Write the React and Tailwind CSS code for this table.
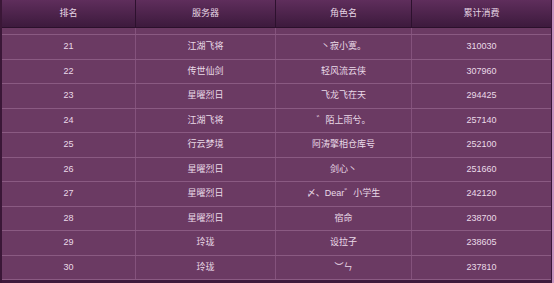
import React from 'react';

const rows = [
  ['21', '江湖飞将', '丶寂小寞。', '310030'],
  ['22', '传世仙剑', '轻风流云侠', '307960'],
  ['23', '星曜烈日', '飞龙飞在天', '294425'],
  ['24', '江湖飞将', '゛陌上雨兮。', '257140'],
  ['25', '行云梦境', '阿涛擎相仓库号', '252100'],
  ['26', '星曜烈日', '剑心丶', '251660'],
  ['27', '星曜烈日', '〆、Dear゛小学生', '242120'],
  ['28', '星曜烈日', '宿命', '238700'],
  ['29', '玲珑', '设拉子', '238605'],
  ['30', '玲珑', '︶ㄣ', '237810'],
];

const headers = ['排名', '服务器', '角色名', '累计消费'];
const cols = 'grid grid-cols-[134px_140px_136px_139px]';

export default function App() {
  return (
    <div
      className="flex w-[554px] h-[283px] overflow-hidden bg-[#6b3a63] text-[9px] text-[#eadbe8]"
      style={{ fontFamily: '"Liberation Sans", "Noto Sans CJK SC", sans-serif' }}
    >
      <div className="w-[2px] bg-[#3a1737]" />
      <div className="flex flex-col w-[549px]">
        {/* header */}
        <div className={`${cols} h-[28px] bg-gradient-to-b from-[#5f2e5c] to-[#3d1a3d] border-b border-[#2c102c]`}>
          {headers.map((h, i) => (
            <div
              key={h}
              className={`flex items-center justify-center text-[#e6d6e4] ${i < 3 ? 'border-r border-[#2d112e]' : ''}`}
            >
              {h}
            </div>
          ))}
        </div>
        {/* spacer band */}
        <div className={`${cols} h-[7px] border-b border-[#8a5a82]`}>
          {[0, 1, 2, 3].map((i) => (
            <div key={i} className={i < 3 ? 'border-r border-[#84527c]' : ''} />
          ))}
        </div>
        {rows.map((r) => (
          <div key={r[0]} className={`${cols} h-[24.5px] border-b border-[#8a5a82]`}>
            {r.map((c, i) => (
              <div
                key={i}
                className={`flex items-center justify-center leading-none ${i < 3 ? 'border-r border-[#84527c]' : ''}`}
              >
                {c}
              </div>
            ))}
          </div>
        ))}
        <div className="flex-1 bg-[#3e1a3c]" />
      </div>
      <div className="w-[1px] bg-[#3a1737]" />
      <div className="w-[2px] bg-[#c893c0]" />
    </div>
  );
}
